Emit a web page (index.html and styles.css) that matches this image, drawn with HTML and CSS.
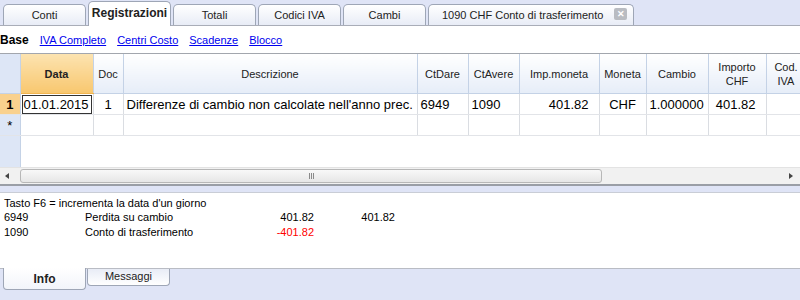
FILE: index.html
```html
<!DOCTYPE html>
<html lang="it">
<head>
  <meta charset="UTF-8" />
  <title>Registrazioni</title>
  <link rel="stylesheet" href="styles.css">
</head>
<body>

  <nav class="doc-tabs">
    <div class="tab">Conti</div>
    <div class="tab active">Registrazioni</div>
    <div class="tab">Totali</div>
    <div class="tab">Codici IVA</div>
    <div class="tab">Cambi</div>
    <div class="tab wide">1090 CHF Conto di trasferimento <span class="close">&#x2715;</span></div>
  </nav>

  <div class="views">
    <b>Base</b>
    <a href="#">IVA Completo</a>
    <a href="#">Centri Costo</a>
    <a href="#">Scadenze</a>
    <a href="#">Blocco</a>
  </div>

  <div class="grid-wrap">
    <table class="grid">
      <colgroup>
        <col style="width:20px"><col style="width:73px"><col style="width:30px"><col style="width:294px">
        <col style="width:51px"><col style="width:51px"><col style="width:80px"><col style="width:47px">
        <col style="width:62px"><col style="width:58px"><col style="width:40px">
      </colgroup>
      <thead>
        <tr>
          <th class="corner"></th>
          <th class="sel">Data</th>
          <th>Doc</th>
          <th>Descrizione</th>
          <th>CtDare</th>
          <th>CtAvere</th>
          <th>Imp.moneta</th>
          <th>Moneta</th>
          <th>Cambio</th>
          <th>Importo<br>CHF</th>
          <th>Cod.<br>IVA</th>
        </tr>
      </thead>
      <tbody>
        <tr>
          <td class="rownum sel">1</td>
          <td><span class="cursor">01.01.2015</span></td>
          <td class="c">1</td>
          <td>Differenze di cambio non calcolate nell'anno prec.</td>
          <td>6949</td>
          <td>1090</td>
          <td class="r">401.82</td>
          <td class="c">CHF</td>
          <td class="r">1.000000</td>
          <td class="r">401.82</td>
          <td></td>
        </tr>
        <tr>
          <td class="rownum">*</td>
          <td></td><td></td><td></td><td></td><td></td><td></td><td></td><td></td><td></td><td></td>
        </tr>
      </tbody>
    </table>
    <div class="filler"><div class="rowhead-fill"></div></div>
    <div class="hscroll">
      <span class="arrow left"></span>
      <div class="thumb"><span class="grip"></span></div>
      <span class="arrow right"></span>
    </div>
  </div>

  <div class="splitter"></div>

  <section class="info">
    <p>Tasto F6 = incrementa la data d'un giorno</p>
    <div class="info-row">
      <span class="acc">6949</span>
      <span class="name">Perdita su cambio</span>
      <span class="amt">401.82</span>
      <span class="amt">401.82</span>
    </div>
    <div class="info-row">
      <span class="acc">1090</span>
      <span class="name">Conto di trasferimento</span>
      <span class="amt neg">-401.82</span>
    </div>
  </section>

  <nav class="bottom-tabs">
    <div class="btab active">Info</div>
    <div class="btab">Messaggi</div>
  </nav>

</body>
</html>
```

FILE: styles.css
```css
body {
  margin: 0;
  width: 800px;
  height: 300px;
  overflow: hidden;
  font-family: 'Liberation Sans', Arial, sans-serif;
  font-size: 11px;
  color: #000;
  background: #fff;
  display: flex;
  flex-direction: column;
}

/* top document tabs */
.doc-tabs {
  display: flex;
  align-items: flex-end;
  height: 26px;
  padding-left: 3px;
  gap: 2px;
  background: #dfe4f6;
  border-bottom: 1px solid #a9adb8;
  box-sizing: border-box;
}

.tab {
  width: 83px;
  height: 21px;
  line-height: 20px;
  text-align: center;
  box-sizing: border-box;
  border: 1px solid #9ea6b6;
  border-bottom: none;
  border-radius: 5px 5px 0 0;
  background: linear-gradient(#ffffff, #e8ecf6);
  color: #222;
}

.tab.active {
  height: 25px;
  line-height: 22px;
  font-weight: bold;
  font-size: 12px;
  background: #fff;
  margin-bottom: -1px;
}

.tab.wide {
  width: 206px;
  text-align: left;
  padding-left: 13px;
  position: relative;
}

.close {
  position: absolute;
  right: 6px;
  top: 3px;
  width: 13px;
  height: 12px;
  line-height: 12px;
  text-align: center;
  font-size: 9px;
  font-weight: bold;
  color: #fff;
  background: #b9bcc2;
  border-radius: 2px;
}

/* view links */
.views {
  height: 26px;
  display: flex;
  align-items: center;
  gap: 11px;
  padding-top: 2px;
  box-sizing: border-box;
}

.views b {
  font-size: 12px;
  margin-right: 0;
}

.views a {
  color: #0000ee;
  font-size: 11px;
}

/* grid */
.grid-wrap {
  margin-top: 1px;
  height: 130px;
  border-top: 1px solid #a2a6ad;
  display: flex;
  flex-direction: column;
}

.grid {
  border-collapse: collapse;
  table-layout: fixed;
  width: 806px;
}

.grid th {
  height: 39px;
  font-weight: normal;
  font-size: 11px;
  color: #222;
  background: linear-gradient(#ffffff, #e6edf8);
  border-right: 1px solid #c4d2e6;
  border-bottom: 1px solid #c4d2e6;
  padding: 0;
  line-height: 14px;
}

.grid th.corner {
  background: #dde6f6;
}

.grid th.sel {
  background: linear-gradient(#fce3b0, #f8c76f);
  font-weight: bold;
  border-bottom-color: #f0b450;
}

.grid td {
  height: 20px;
  padding: 0 3px;
  font-size: 13px;
  border-right: 1px solid #dadde2;
  border-bottom: 1px solid #e2e4e8;
  white-space: nowrap;
  overflow: hidden;
}

.grid td.r { text-align: right; padding-right: 10px; }
.grid td.c { text-align: center; }

.grid td.rownum {
  background: #dde6f6;
  text-align: center;
  padding: 0;
  border-right: 1px solid #c4d2e6;
}

.grid td.rownum.sel {
  background: #f9d18e;
  font-weight: bold;
}

.grid td:nth-child(2) { padding: 0 1px; }

.cursor {
  display: block;
  border: 1px solid #333;
  line-height: 17px;
  padding-left: 1px;
}

.filler {
  flex: 1;
  display: flex;
}

.rowhead-fill {
  width: 20px;
  background: #dde6f6;
  border-right: 1px solid #c4d2e6;
}

.hscroll {
  height: 16px;
  display: flex;
  align-items: center;
  background: #f1f1f1;
  border-top: 1px solid #e3e3e3;
}

.arrow {
  width: 18px;
  height: 16px;
  position: relative;
}

.arrow::after {
  content: "";
  position: absolute;
  top: 5px;
  border: 3px solid transparent;
}

.arrow.left::after {
  left: 5px;
  border-right: 4px solid #444;
  border-left: none;
}

.arrow.right { margin-left: auto; }

.arrow.right::after {
  right: 7px;
  border-left: 4px solid #444;
  border-right: none;
}

.thumb {
  width: 582px;
  height: 14px;
  margin-left: 2px;
  box-sizing: border-box;
  border: 1px solid #b7b7b7;
  border-radius: 3px;
  background: linear-gradient(#f8f8f8, #e6e6e6);
  display: flex;
  align-items: center;
  justify-content: center;
}

.grip {
  width: 5px;
  height: 6px;
  background: repeating-linear-gradient(90deg, #8a8a8a 0 1px, transparent 1px 2px);
}

.splitter {
  height: 6px;
  border-top: 2px solid #9a9ea6;
  background: #dfe4f6;
  border-bottom: 1px solid #c9cdd6;
}

/* info panel */
.info {
  flex: 1;
  padding: 3px 4px 0;
  font-size: 11px;
}

.info p {
  margin: 0;
  height: 14px;
  line-height: 14px;
}

.info-row {
  display: flex;
  height: 15px;
  line-height: 15px;
}

.acc { width: 81px; }
.name { width: 150px; }
.amt { width: 79px; text-align: right; }
.amt + .amt { width: 81px; }
.neg { color: #ff0000; }

/* bottom tabs */
.bottom-tabs {
  height: 32px;
  display: flex;
  align-items: flex-start;
  padding-left: 3px;
  gap: 1px;
  background: #dfe4f6;
  border-top: 1px solid #b9bcc4;
  box-sizing: border-box;
}

.btab {
  width: 83px;
  height: 17px;
  line-height: 15px;
  text-align: center;
  box-sizing: border-box;
  border: 1px solid #9ea6b6;
  border-top: none;
  border-radius: 0 0 4px 4px;
  background: linear-gradient(#e8ecf6, #ffffff);
  color: #222;
}

.btab.active {
  height: 22px;
  line-height: 22px;
  margin-top: -1px;
  font-weight: bold;
  font-size: 12px;
  background: linear-gradient(#ffffff, #f2f4fa);
}
```
